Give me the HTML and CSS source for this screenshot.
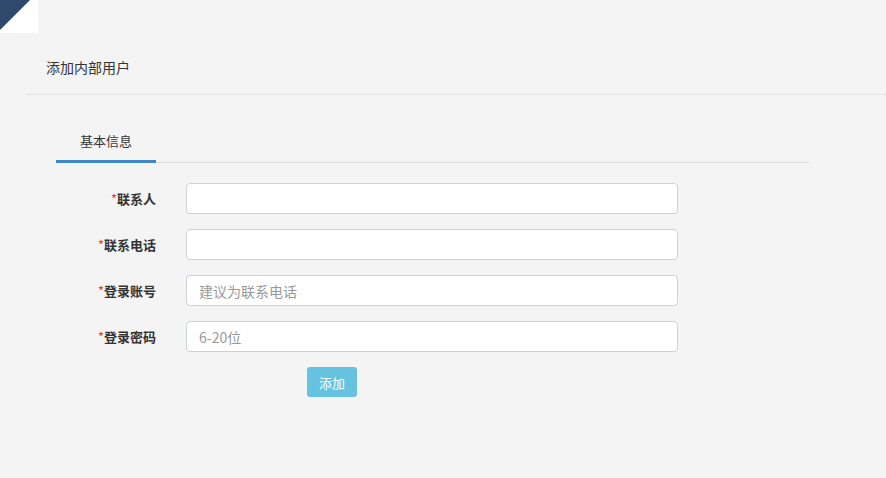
FILE: index.html
```html
<!DOCTYPE html>
<html lang="zh">
<head>
<meta charset="utf-8">
<link rel="stylesheet" href="styles.css">
</head>
<body>
<div class="corner"><svg width="38" height="33" viewBox="0 0 38 33"><polygon points="0,0 30,0 0,30" fill="#2d4a6c"/></svg></div>
<div class="header">添加内部用户</div>
<div class="content">
  <div class="tabs"><div class="tab active">基本信息</div></div>
  <form class="form">
    <div class="row"><label class="lbl"><span class="req">*</span>联系人</label><input class="inp" type="text"></div>
    <div class="row"><label class="lbl"><span class="req">*</span>联系电话</label><input class="inp" type="text"></div>
    <div class="row"><label class="lbl"><span class="req">*</span>登录账号</label><input class="inp" type="text" placeholder="建议为联系电话"></div>
    <div class="row"><label class="lbl"><span class="req">*</span>登录密码</label><input class="inp" type="text" placeholder="6-20位"></div>
    <div class="actions"><button type="button" class="btn">添加</button></div>
  </form>
</div>
</body>
</html>
```
FILE: styles.css
```css
* { box-sizing: border-box; }
html, body { margin: 0; padding: 0; }
body {
  background: #f4f4f4;
  font-family: "Noto Sans CJK SC", "Liberation Sans", sans-serif;
  color: #333;
  width: 886px;
  height: 478px;
  overflow: hidden;
}
.corner { width: 38px; height: 33px; background: #fff; line-height: 0; }
.corner svg { display: block; }
.header {
  margin-left: 26px;
  padding: 24px 0 17px 20px;
  font-size: 14px;
  line-height: 20px;
  border-bottom: 1px dotted #d8d8d8;
}
.content { padding: 37px 0 0 56px; }
.tabs { width: 753px; border-bottom: 1px solid #dcdcdc; display: flex; }
.tab {
  width: 100px;
  text-align: center;
  font-size: 13px;
  line-height: 18px;
  padding-bottom: 10px;
  border-bottom: 3px solid transparent;
  margin-bottom: -1px;
}
.tab.active { border-bottom-color: #3f86c8; }
.form { padding-top: 20px; display: flex; flex-direction: column; gap: 15px; }
.row { display: flex; align-items: center; }
.lbl {
  width: 100px;
  text-align: right;
  font-size: 13px;
  font-weight: bold;
  color: #333;
  margin-right: 30px;
}
.req { color: #e33; font-weight: normal; }
.inp {
  width: 492px;
  height: 31px;
  border: 1px solid #ccd3da;
  border-radius: 4px;
  background: #fff;
  padding: 0 12px;
  font-family: inherit;
  font-size: 14px;
  color: #333;
  outline: none;
}
.inp::placeholder { color: #999; }
.actions { padding-left: 251px; }
.btn {
  width: 50px;
  height: 30px;
  border: none;
  border-radius: 3px;
  background: #66c3df;
  color: #fff;
  font-family: inherit;
  font-size: 13px;
  padding: 0;
}
```
